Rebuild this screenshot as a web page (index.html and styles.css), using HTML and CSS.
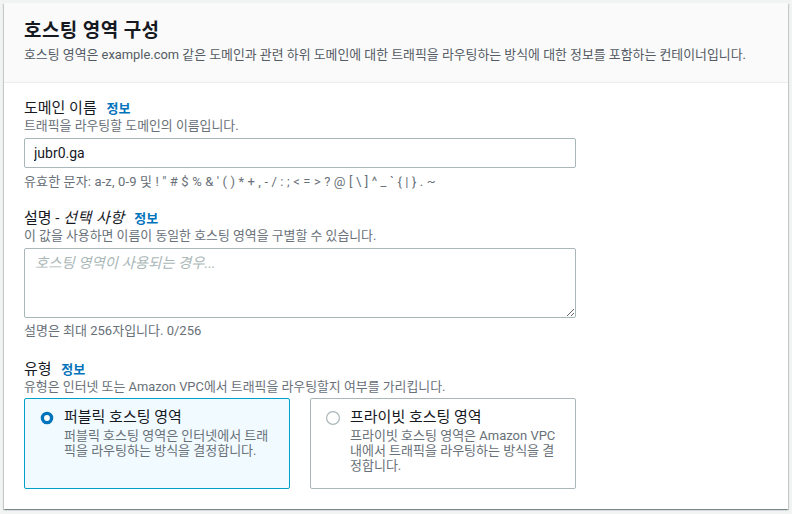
FILE: index.html
```html
<!DOCTYPE html>
<html lang="ko">
<head>
<meta charset="utf-8">
<link rel="stylesheet" href="styles.css">
</head>
<body>
<div class="container">
  <div class="header">
    <h2 class="title">호스팅 영역 구성</h2>
    <p class="subtitle">호스팅 영역은 example.com 같은 도메인과 관련 하위 도메인에 대한 트래픽을 라우팅하는 방식에 대한 정보를 포함하는 컨테이너입니다.</p>
  </div>
  <div class="body">
    <div class="field">
      <div class="label">도메인 이름 <a class="info">정보</a></div>
      <div class="desc">트래픽을 라우팅할 도메인의 이름입니다.</div>
      <input class="input" type="text" value="jubr0.ga">
      <div class="hint">유효한 문자: a-z, 0-9 및 ! " # $ % &amp; ' ( ) * + , - / : ; &lt; = &gt; ? @ [ \ ] ^ _ ` { | } . ~</div>
    </div>
    <div class="field field-2">
      <div class="label">설명 - <i>선택 사항</i> <a class="info">정보</a></div>
      <div class="desc">이 값을 사용하면 이름이 동일한 호스팅 영역을 구별할 수 있습니다.</div>
      <textarea class="textarea" placeholder="호스팅 영역이 사용되는 경우..."></textarea>
      <div class="hint hint-tight">설명은 최대 256자입니다. 0/256</div>
    </div>
    <div class="field field-3">
      <div class="label">유형 <a class="info">정보</a></div>
      <div class="desc">유형은 인터넷 또는 Amazon VPC에서 트래픽을 라우팅할지 여부를 가리킵니다.</div>
      <div class="tiles">
        <div class="tile selected">
          <svg class="radio" width="16" height="16" viewBox="0 0 16 16"><circle cx="8" cy="8" r="4.6" fill="#fff" stroke="#0073bb" stroke-width="3.4"/></svg>
          <div class="tile-text">
            <div class="tile-title">퍼블릭 호스팅 영역</div>
            <div class="tile-desc">퍼블릭 호스팅 영역은 인터넷에서 트래픽을 라우팅하는 방식을 결정합니다.</div>
          </div>
        </div>
        <div class="tile">
          <svg class="radio" width="16" height="16" viewBox="0 0 16 16"><circle cx="8" cy="8" r="6.4" fill="#fff" stroke="#aab7b8" stroke-width="1.2"/></svg>
          <div class="tile-text">
            <div class="tile-title">프라이빗 호스팅 영역</div>
            <div class="tile-desc">프라이빗 호스팅 영역은 Amazon VPC 내에서 트래픽을 라우팅하는 방식을 결정합니다.</div>
          </div>
        </div>
      </div>
    </div>
  </div>
</div>
</body>
</html>
```
FILE: styles.css
```css
html, body {
  margin: 0;
  padding: 0;
  background: #f2f3f3;
}
body {
  padding: 3px 4px 4px 4px;
  font-family: Roboto, "Noto Sans CJK KR", sans-serif;
  color: #16191f;
}
.container {
  background: #fff;
  box-shadow: 0 1px 1px 0 rgba(0,28,36,.3), 1px 1px 1px 0 rgba(0,28,36,.15), -1px 1px 1px 0 rgba(0,28,36,.15);
}
.header {
  background: #fafafa;
  border-bottom: 1px solid #eaeded;
  padding: 17px 20px 16px 20px;
}
.title {
  margin: 0;
  font-size: 19px;
  letter-spacing: 0.4px;
  line-height: 22px;
  font-weight: 700;
  color: #16191f;
}
.subtitle {
  margin: 2px 0 0 0;
  font-size: 12.9px;
  line-height: 22px;
  color: #545b64;
  white-space: nowrap;
}
.body {
  padding: 15px 20px 20px 20px;
  display: flex;
  flex-direction: column;
}
.field {
  display: flex;
  flex-direction: column;
  flex: none;
  width: 552px;
}
.field-2 {
  margin-top: 18px;
}
.field-3 {
  margin-top: 20px;
}
.label {
  height: 20px;
  font-size: 15px;
  line-height: 20px;
  color: #16191f;
}
.label i {
  font-style: italic;
  letter-spacing: 0.5px;
}
.info {
  margin-left: 6px;
  font-size: 13px;
  line-height: 0;
  font-weight: 700;
  color: #0073bb;
}
.desc {
  font-size: 12.9px;
  line-height: 16px;
  color: #687078;
}
.input {
  box-sizing: border-box;
  margin: 4px 0 0 0;
  width: 552px;
  height: 30px;
  border: 1px solid #aab7b8;
  border-radius: 2px;
  padding: 0 9px;
  font-family: Roboto, "Noto Sans CJK KR", sans-serif;
  font-size: 14px;
  color: #16191f;
  background: #fff;
  outline: none;
}
.textarea {
  box-sizing: border-box;
  margin: 4px 0 0 0;
  width: 552px;
  height: 70px;
  border: 1px solid #aab7b8;
  border-radius: 2px;
  padding: 4px 10px;
  font-family: Roboto, "Noto Sans CJK KR", sans-serif;
  font-size: 14.4px;
  line-height: 22px;
  background: #fff;
  outline: none;
  display: block;
}
.textarea::placeholder {
  color: #aab7b8;
  font-style: italic;
}
.hint {
  margin-top: 6px;
  font-size: 13px;
  letter-spacing: 0.13px;
  line-height: 16px;
  color: #687078;
}
.hint-tight {
  margin-top: 5px;
  letter-spacing: 0;
}
.tiles {
  margin-top: 3px;
  display: flex;
  gap: 20px;
}
.tile {
  box-sizing: border-box;
  flex: none;
  width: 266px;
  height: 91px;
  border: 1px solid #aab7b8;
  border-radius: 2px;
  padding: 8px 0 0 14px;
  display: flex;
  gap: 9px;
  background: #fff;
}
.tile.selected {
  border-color: #00a1c9;
  background: #f1faff;
}
.radio {
  flex: none;
  margin-top: 3px;
}
.tile-text {
  width: 209px;
}
.tile-title {
  font-size: 15px;
  line-height: 20px;
  color: #16191f;
}
.tile-desc {
  margin-top: 1px;
  font-size: 13px;
  line-height: 15px;
  color: #687078;
}
```
